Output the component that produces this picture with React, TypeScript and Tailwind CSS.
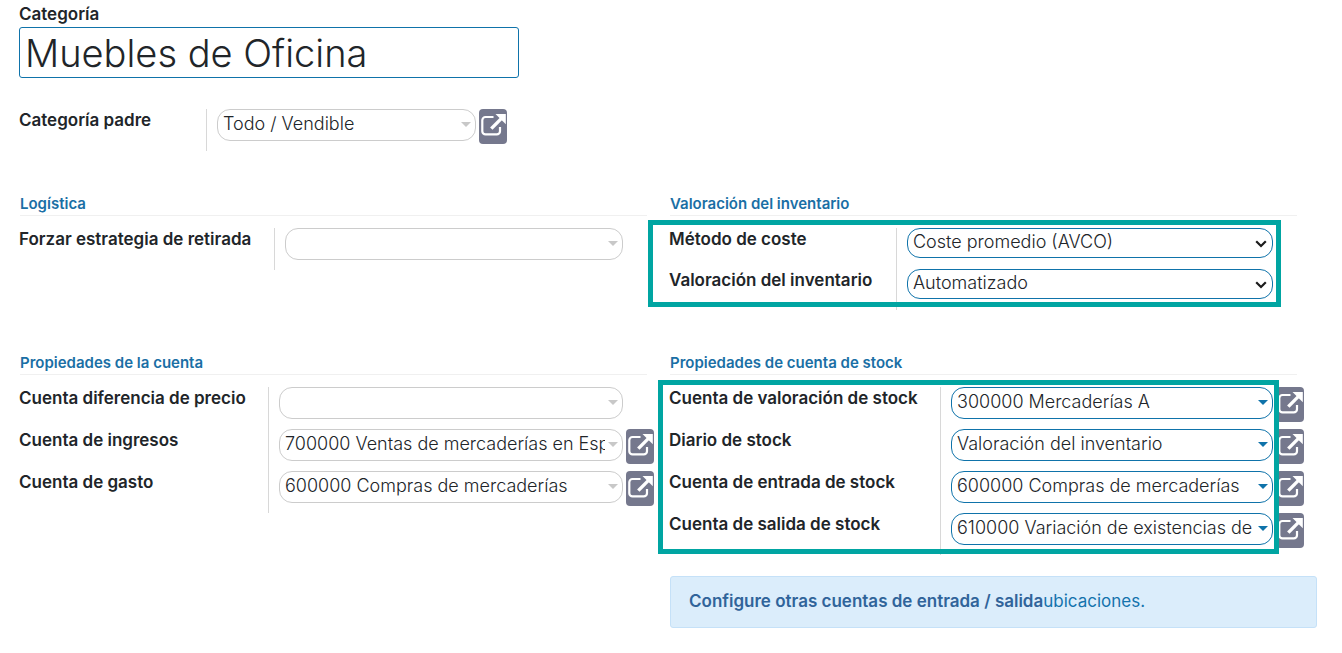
import React, { useId } from "react";
import clsx from "clsx";

function ExternalLinkButton({ label }: { label: string }) {
  return (
    <button
      type="button"
      aria-label={`Abrir ${label}`}
      className="ml-[3px] h-[35px] w-7 shrink-0 rounded-[4px] bg-[#75788d] text-white"
    >
      <svg viewBox="0 0 28 35" className="h-full w-full" fill="none" aria-hidden="true">
        <path
          d="M14.500 8H6.500a3.200 3.200 0 0 0-3.200 3.200v11a3.200 3.200 0 0 0 3.200 3.200h11.300a3.200 3.200 0 0 0 3.200-3.200V18"
          stroke="currentColor"
          strokeWidth="2.2"
        />
        <path d="M12.300 19.600 22.500 9.400" stroke="currentColor" strokeWidth="3.400" />
        <path d="M16.500 5h10.300v10.300z" fill="currentColor" />
      </svg>
    </button>
  );
}

type Kind = "optional" | "required" | "selection";

type FieldProps = {
  label: string;
  value: string;
  kind: Kind;
  labelWidth: string;
  link?: boolean;
};

function Field({ label, value, kind, labelWidth, link }: FieldProps) {
  const id = useId();
  return (
    <div className={clsx("flex items-start", kind === "selection" ? "h-[41px]" : "h-[42px]")}>
      <label
        htmlFor={id}
        className={clsx(
          "h-full shrink-0 whitespace-nowrap border-r border-[#d8d8d8] text-[17px] leading-[22px] font-semibold text-[#212529]",
          labelWidth,
        )}
      >
        {label}
      </label>
      <div className="relative ml-[10px] min-w-0 flex-1">
        <select
          id={id}
          defaultValue={value}
          className={clsx(
            "block w-full appearance-none overflow-hidden rounded-[13px] border bg-white pb-[2px] pl-[5px] text-lg leading-6 font-light text-[#212529]",
            kind === "selection" ? "h-[30px] pr-6" : "h-8 pr-[17px]",
            kind === "optional" ? "border-[#cccccc]" : "border-[#0f73aa]",
          )}
        >
          <option>{value}</option>
        </select>
        {kind === "selection" ? (
          <svg
            viewBox="0 0 12 8"
            className="pointer-events-none absolute top-3 right-[6px] h-2 w-3"
            fill="none"
            aria-hidden="true"
          >
            <path d="m1.200 1.200 4.800 4.800 4.800-4.800" stroke="#1c1c1c" strokeWidth="2.2" />
          </svg>
        ) : (
          <svg
            viewBox="0 0 10 5"
            className={clsx(
              "pointer-events-none absolute top-[13px] right-[5px] h-[5px] w-[10px]",
              kind === "required" ? "text-[#0f73aa]" : "text-[#c8c8c8]",
            )}
            aria-hidden="true"
          >
            <path d="M0 0h10L5 5z" fill="currentColor" />
          </svg>
        )}
      </div>
      {link ? <ExternalLinkButton label={label} /> : <span className="w-[31px] shrink-0" />}
    </div>
  );
}

function Group({
  title,
  highlight,
  children,
}: {
  title: string;
  highlight?: string;
  children: React.ReactNode;
}) {
  return (
    <section>
      <h2 className="mr-[22px] ml-px border-b border-[#f0f0f0] pt-[2px] text-[15px] leading-[22px] font-semibold text-[#1a6fa5]">
        {title}
      </h2>
      <div className="relative mt-3 mr-[15px]">
        {children}
        {highlight && (
          <div
            className={clsx("pointer-events-none absolute border-[5px] border-[#00a5a2]", highlight)}
          />
        )}
      </div>
    </section>
  );
}

export default function App() {
  return (
    <main className="min-h-screen bg-white pt-[3px] pr-[23px] pb-6 pl-[19px] font-['Inter','Open_Sans',sans-serif] text-[#212529]">
      <label htmlFor="category" className="block pb-[2px] text-[17px] leading-[22px] font-semibold">
        Categoría
      </label>
      <input
        id="category"
        defaultValue="Muebles de Oficina"
        className="block h-[51px] w-full max-w-[500px] rounded-[3px] border border-[#0f73aa] px-[5px] pt-[2px] text-[38px] font-light"
      />
      <div className="mt-[31px] max-w-[488px]">
        <Field
          label="Categoría padre"
          value="Todo / Vendible"
          kind="optional"
          labelWidth="w-[188px]"
          link
        />
      </div>

      <div className="mt-10 grid grid-cols-2">
        <Group title="Logística">
          <Field
            label="Forzar estrategia de retirada"
            value=""
            kind="optional"
            labelWidth="w-[256px]"
          />
        </Group>
        <Group
          title="Valoración del inventario"
          highlight="-top-[8px] -bottom-[-3px] -left-[21px] right-[23px]"
        >
          <Field
            label="Método de coste"
            value="Coste promedio (AVCO)"
            kind="selection"
            labelWidth="w-[228px]"
          />
          <Field
            label="Valoración del inventario"
            value="Automatizado"
            kind="selection"
            labelWidth="w-[228px]"
          />
        </Group>
      </div>

      <div className="mt-10 grid grid-cols-2">
        <Group title="Propiedades de la cuenta">
          <Field
            label="Cuenta diferencia de precio"
            value=""
            kind="optional"
            labelWidth="w-[250px]"
          />
          <Field
            label="Cuenta de ingresos"
            value="700000 Ventas de mercaderías en España"
            kind="optional"
            labelWidth="w-[250px]"
            link
          />
          <Field
            label="Cuenta de gasto"
            value="600000 Compras de mercaderías"
            kind="optional"
            labelWidth="w-[250px]"
            link
          />
        </Group>
        <div>
          <Group
            title="Propiedades de cuenta de stock"
            highlight="-top-[7px] bottom-[1px] -left-[11px] right-[25px]"
          >
            <Field
              label="Cuenta de valoración de stock"
              value="300000 Mercaderías A"
              kind="required"
              labelWidth="w-[272px]"
              link
            />
            <Field
              label="Diario de stock"
              value="Valoración del inventario"
              kind="required"
              labelWidth="w-[272px]"
              link
            />
            <Field
              label="Cuenta de entrada de stock"
              value="600000 Compras de mercaderías"
              kind="required"
              labelWidth="w-[272px]"
              link
            />
            <Field
              label="Cuenta de salida de stock"
              value="610000 Variación de existencias de mercaderías"
              kind="required"
              labelWidth="w-[272px]"
              link
            />
          </Group>
          <p className="mt-[21px] mr-[2px] ml-px rounded-[3px] border border-[#c5e1f8] bg-[#dbedfb] px-[18px] pt-3 pb-[14px] text-[17px] leading-6 text-[#30649a]">
            <strong className="font-semibold">Configure otras cuentas de entrada / salida</strong>
            <a href="#ubicaciones" className="text-[#1473ad]">
              ubicaciones.
            </a>
          </p>
        </div>
      </div>
    </main>
  );
}
